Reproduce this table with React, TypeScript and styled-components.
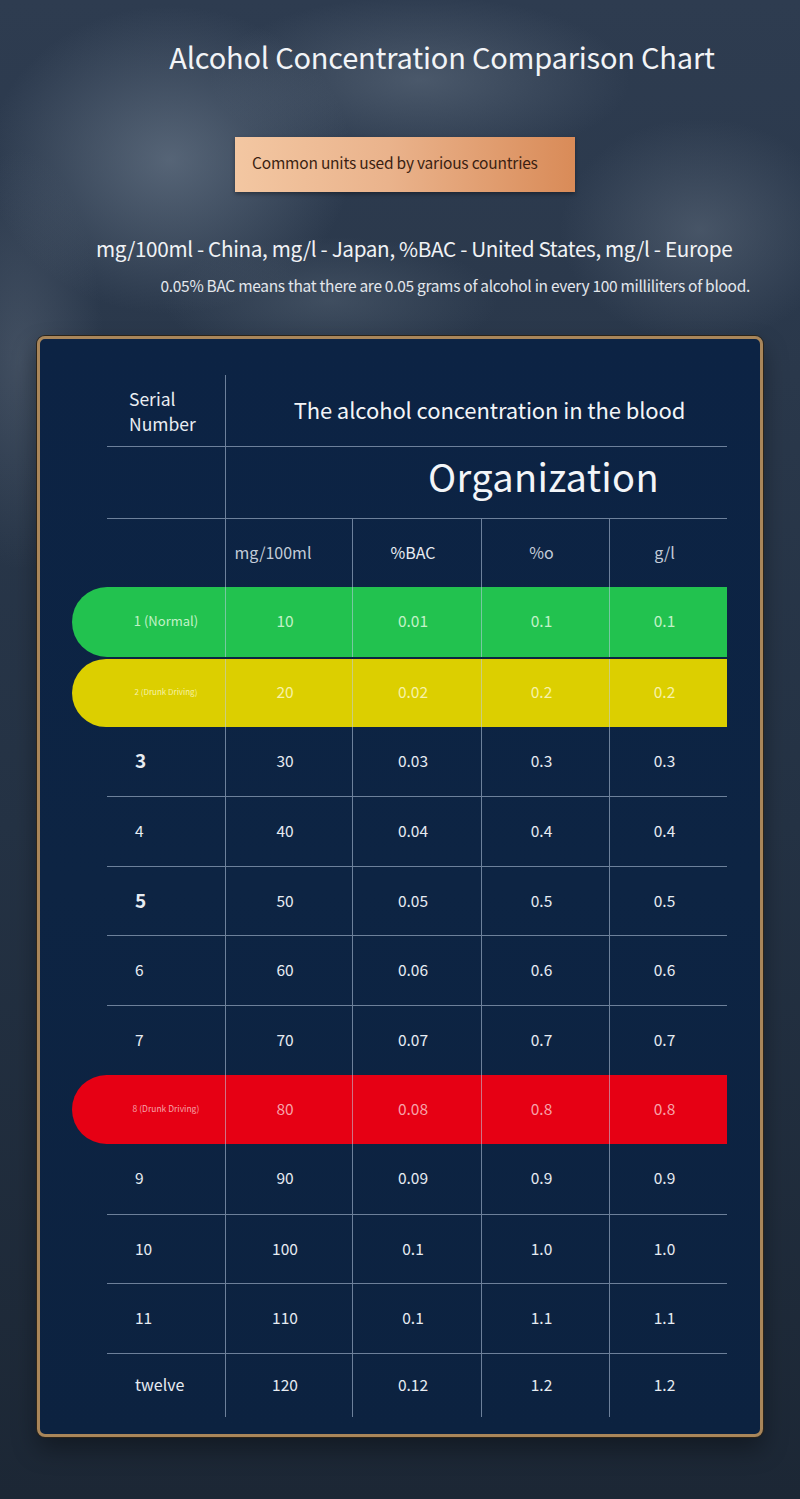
import styled, { createGlobalStyle } from "styled-components";

const GlobalStyle = createGlobalStyle`
  html, body {
    margin: 0;
    padding: 0;
    background: #1f2b3b;
  }
  body {
    font-family: "Noto Sans CJK SC", "Noto Sans", sans-serif;
  }
`;

const Page = styled.div`
  width: 800px;
  min-height: 1499px;
  box-sizing: border-box;
  padding-top: 38px;
  color: #eef1f5;
  background:
    radial-gradient(ellipse 260px 220px at 170px 160px, rgba(120, 135, 152, 0.55), transparent 70%),
    radial-gradient(ellipse 300px 120px at 420px 80px, rgba(110, 124, 140, 0.45), transparent 70%),
    radial-gradient(ellipse 200px 160px at 700px 230px, rgba(105, 118, 134, 0.45), transparent 70%),
    radial-gradient(ellipse 240px 90px at 330px 300px, rgba(95, 110, 126, 0.4), transparent 70%),
    radial-gradient(ellipse 120px 300px at 20px 360px, rgba(110, 122, 138, 0.35), transparent 70%),
    linear-gradient(180deg, #2e3c50 0%, #2a384b 25%, #243244 55%, #1c2735 100%);
`;

const Title = styled.h1`
  margin: 0;
  padding-left: 84px;
  text-align: center;
  font-size: 29px;
  line-height: 36px;
  font-weight: 400;
  letter-spacing: -0.2px;
  color: #f2f4f7;
`;

const Badge = styled.div`
  margin: 63px 0 0 235px;
  width: 340px;
  height: 55px;
  box-sizing: border-box;
  padding: 0 0 5px 17px;
  display: flex;
  align-items: center;
  font-size: 15.5px;
  letter-spacing: -0.2px;
  color: #3b1f12;
  background: linear-gradient(90deg, #f3c7a2 0%, #eab38c 45%, #d98b58 100%);
  box-shadow: 0 2px 4px rgba(0, 0, 0, 0.35);
`;

const Units = styled.p`
  margin: 42px 0 0;
  padding-left: 96px;
  font-size: 20.7px;
  line-height: 28px;
  letter-spacing: -0.35px;
  color: #f0f2f5;
`;

const Note = styled.p`
  margin: 13px 0 0;
  padding-right: 50px;
  text-align: right;
  font-size: 15.5px;
  line-height: 20px;
  letter-spacing: -0.3px;
  color: #e3e7ec;
`;

const Panel = styled.div`
  margin: 41px 0 0 37px;
  width: 726px;
  height: 1101px;
  box-sizing: border-box;
  padding: 36px 33px 0 32px;
  border: 3px solid #a9865a;
  border-radius: 8px;
  background: linear-gradient(180deg, #0c2344 0%, #0d2443 50%, #0c2240 100%);
  box-shadow: 0 0 0 1px #2c2419, 0 12px 24px rgba(0, 0, 0, 0.35);
`;

const Table = styled.div`
  width: 655px;
  display: flex;
  flex-direction: column;
`;

const line = "1.5px solid rgba(190, 205, 228, 0.55)";

const HeadRow = styled.div<{ $line?: boolean }>`
  margin-left: 35px;
  display: grid;
  grid-template-columns: 118px 502px;
  height: 71px;
  border-top: ${(p) => (p.$line ? line : "none")};
`;

const SerialHead = styled.div`
  padding-left: 22px;
  display: flex;
  align-items: center;
  font-size: 17.5px;
  line-height: 25px;
  color: #e9edf2;
`;

const WideHead = styled.div<{ $big?: boolean }>`
  border-left: ${line};
  display: flex;
  align-items: center;
  justify-content: center;
  padding-left: ${(p) => (p.$big ? "134px" : "26px")};
  padding-bottom: ${(p) => (p.$big ? "14px" : "4px")};
  font-size: ${(p) => (p.$big ? "38px" : "22px")};
  color: #f3f5f8;
  letter-spacing: ${(p) => (p.$big ? "0.3px" : "-0.1px")};
`;

const Row = styled.div<{ $pill?: string; $line?: boolean; $gap?: boolean }>`
  display: grid;
  grid-template-columns: ${(p) => (p.$pill ? "153px" : "118px")} 127px 129px 128px 118px;
  margin-left: ${(p) => (p.$pill ? "0" : "35px")};
  margin-top: ${(p) => (p.$gap ? "2px" : "0")};
  height: ${(p) => (p.$gap ? "68px" : "69.6px")};
  box-sizing: border-box;
  background: ${(p) => p.$pill || "transparent"};
  border-radius: ${(p) => (p.$pill ? "35px 0 0 35px" : "0")};
  border-top: ${(p) => (p.$line ? line : "none")};

  &:last-child {
    height: 64px;
  }
`;

const UnitRow = styled(Row)`
  height: 69px;
`;

const Cell = styled.div<{ $color?: string; $size?: number; $dim?: boolean; $shift?: number }>`
  display: flex;
  align-items: center;
  justify-content: center;
  border-left: ${line};
  font-size: ${(p) => p.$size || 15.5}px;
  color: ${(p) => p.$color || (p.$dim ? "#c3ccd8" : "#e7ecf2")};
  padding-right: ${(p) => p.$shift ?? 8}px;
  padding-bottom: 3px;
`;

const SerialCell = styled.div<{ $pill?: boolean; $color?: string; $size?: number; $bold?: boolean }>`
  display: flex;
  align-items: center;
  justify-content: ${(p) => (p.$pill ? "center" : "flex-start")};
  padding-left: ${(p) => (p.$pill ? "35px" : "28px")};
  padding-bottom: 3px;
  font-size: ${(p) => p.$size || 15.5}px;
  font-weight: ${(p) => (p.$bold ? 700 : 400)};
  color: ${(p) => p.$color || "#e7ecf2"};
`;

type Entry = {
  serial: string;
  values: string[];
  pill?: string;
  text?: string;
  size?: number;
  bold?: boolean;
  line?: boolean;
  gap?: boolean;
};

const rows: Entry[] = [
  { serial: "1 (Normal)", values: ["10", "0.01", "0.1", "0.1"], pill: "#22c24f", text: "#c2f2c8", size: 13 },
  { serial: "2 (Drunk Driving)", values: ["20", "0.02", "0.2", "0.2"], pill: "#dccf00", text: "#f7f2a8", size: 8, gap: true },
  { serial: "3", values: ["30", "0.03", "0.3", "0.3"], size: 19, bold: true },
  { serial: "4", values: ["40", "0.04", "0.4", "0.4"], line: true },
  { serial: "5", values: ["50", "0.05", "0.5", "0.5"], size: 19, bold: true, line: true },
  { serial: "6", values: ["60", "0.06", "0.6", "0.6"], line: true },
  { serial: "7", values: ["70", "0.07", "0.7", "0.7"], line: true },
  { serial: "8 (Drunk Driving)", values: ["80", "0.08", "0.8", "0.8"], pill: "#e60014", text: "#f7a2a9", size: 8.5 },
  { serial: "9", values: ["90", "0.09", "0.9", "0.9"] },
  { serial: "10", values: ["100", "0.1", "1.0", "1.0"], line: true },
  { serial: "11", values: ["110", "0.1", "1.1", "1.1"], line: true },
  { serial: "twelve", values: ["120", "0.12", "1.2", "1.2"], size: 16, line: true },
];

const App = () => {
  return (
    <>
      <GlobalStyle />
      <Page>
        <Title>Alcohol Concentration Comparison Chart</Title>
        <Badge>Common units used by various countries</Badge>
        <Units>mg/100ml - China, mg/l - Japan, %BAC - United States, mg/l - Europe</Units>
        <Note>0.05% BAC means that there are 0.05 grams of alcohol in every 100 milliliters of blood.</Note>
        <Panel>
          <Table>
            <HeadRow>
              <SerialHead>
                Serial
                <br />
                Number
              </SerialHead>
              <WideHead>The alcohol concentration in the blood</WideHead>
            </HeadRow>
            <HeadRow $line>
              <div />
              <WideHead $big>Organization</WideHead>
            </HeadRow>
            <UnitRow $line>
              <div />
              <Cell $dim $size={16} $shift={32}>mg/100ml</Cell>
              <Cell $size={16}>%BAC</Cell>
              <Cell $dim $size={16}>%o</Cell>
              <Cell $dim $size={16}>g/l</Cell>
            </UnitRow>
            {rows.map((r) => (
              <Row key={r.serial} $pill={r.pill} $line={r.line} $gap={r.gap}>
                <SerialCell $pill={!!r.pill} $color={r.text} $size={r.size} $bold={r.bold}>
                  {r.serial}
                </SerialCell>
                {r.values.map((v, i) => (
                  <Cell key={i} $color={r.text}>
                    {v}
                  </Cell>
                ))}
              </Row>
            ))}
          </Table>
        </Panel>
      </Page>
    </>
  );
};

export default App;
